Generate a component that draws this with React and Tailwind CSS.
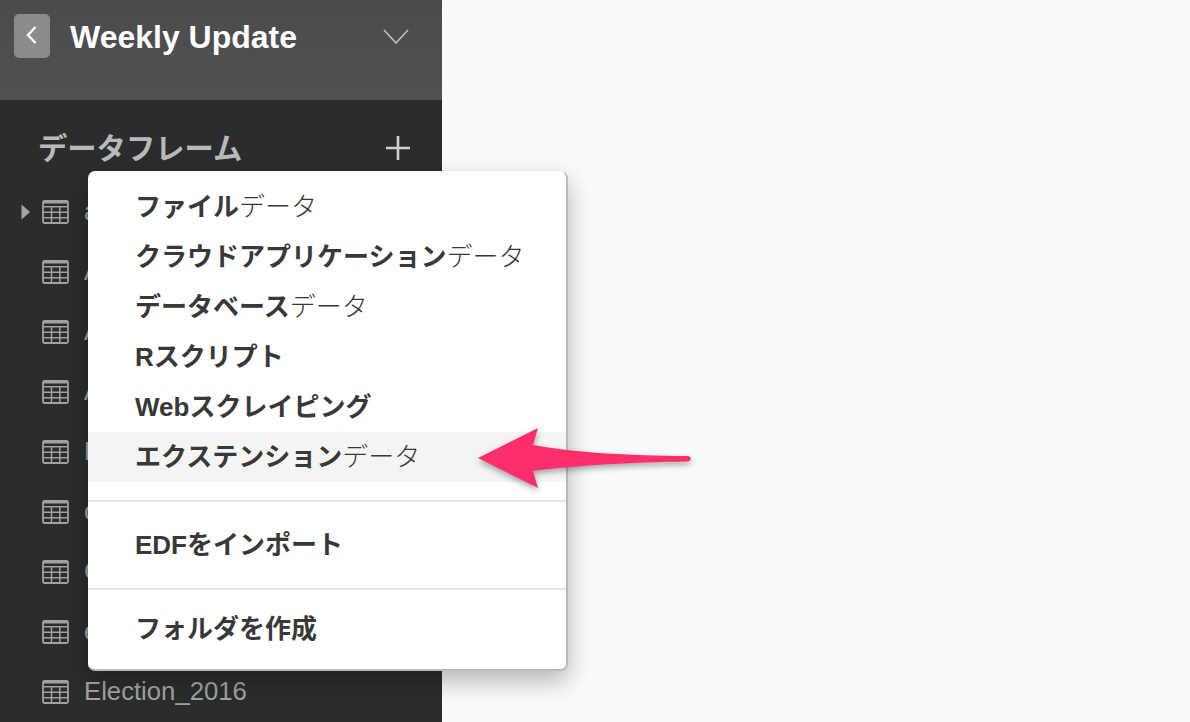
const LATIN = '"Liberation Sans","Noto Sans CJK JP",sans-serif';

function TableIcon() {
  return (
    <svg width="27" height="24" viewBox="0 0 27 24" fill="none" stroke="#a0a1a1" strokeWidth="1.5" className="shrink-0">
      <rect x="1" y="1" width="25" height="22" rx="1.500" strokeWidth="1.800" />
      <path d="M1.500 2.500H25.500" strokeWidth="2" />
      <path d="M1.500 6.800H25.500M1.500 12.300H25.500M1.500 17.800H25.500M9.500 6V22.500M17.800 6V22.500" />
    </svg>
  );
}

const rows = ['airline_delay', 'Airline', 'Airport', 'Apple', 'Bank', 'customer', 'Crime', 'employee', 'Election_2016'];

function Row({ name, first }) {
  return (
    <div className="h-[60px] flex items-center relative pl-[42px] gap-[15px]">
      {first && (
        <svg width="10" height="16" viewBox="0 0 10 16" className="absolute left-[21px] top-[22px]">
          <path d="M0.5 0.5L9 8L0.5 15.5Z" fill="#a3a4a4" />
        </svg>
      )}
      <TableIcon />
      <span className="text-[25.700px] text-[#a2a3a3] whitespace-nowrap -mt-[1px]">{name}</span>
    </div>
  );
}

function Item({ bold, light, active }) {
  return (
    <div className={`h-[50px] flex items-center pl-[47px] text-[26px] text-[#383838] whitespace-nowrap ${active ? 'bg-[#f4f4f4]' : ''}`}>
      <span className="font-bold">{bold}</span>
      {light && <span className="font-light">{light}</span>}
    </div>
  );
}

export default function App() {
  return (
    <div className="relative w-[1190px] h-[722px] overflow-hidden flex bg-[#fafafa]" style={{ fontFamily: LATIN }}>
      <aside className="w-[442px] h-full bg-[#2b2d2d] flex flex-col shrink-0">
        <header className="h-[100px] shrink-0 bg-gradient-to-b from-[#4a4b4d] to-[#505153] flex items-start pl-[14px] pt-[14px]">
          <div className="w-[36px] h-[44px] rounded-[5px] bg-[#8b8b8b] flex items-center justify-center">
            <svg width="14" height="20" viewBox="0 0 14 20" fill="none" stroke="#fff" strokeWidth="2.4" className="-mt-[2px]">
              <path d="M10.500 2L3 10L10.500 18" />
            </svg>
          </div>
          <h1 className="ml-[20px] text-[32px] leading-[46px] font-bold text-white whitespace-nowrap">Weekly Update</h1>
          <svg width="26" height="15" viewBox="0 0 26 15" fill="none" stroke="#c4c5c6" strokeWidth="1.5" className="ml-[86px] mt-[15px]">
            <path d="M1 1L13 14L25 1" />
          </svg>
        </header>
        <div className="h-[82px] shrink-0 flex items-center pl-[38px] pt-[14px]">
          <span className="text-[29.300px] font-semibold text-[#b8b9b9] w-[347px] whitespace-nowrap mt-[2px]">データフレーム</span>
          <svg width="26" height="26" viewBox="0 0 26 26" stroke="#cfd0d0" strokeWidth="2.6">
            <path d="M13 1V25M1 13H25" />
          </svg>
        </div>
        <div>
          {rows.map((n, i) => <Row key={n} name={n} first={i === 0} />)}
        </div>
      </aside>

      <div className="absolute left-[88px] top-[171px] w-[480px] h-[500px] bg-white rounded-[7px] border-r-2 border-b-2 border-[#b9b9b9] shadow-[0_10px_24px_rgba(0,0,0,0.28)] pt-[11px]">
        <Item bold="ファイル" light="データ" />
        <Item bold="クラウドアプリケーション" light="データ" />
        <Item bold="データベース" light="データ" />
        <Item bold="Rスクリプト" />
        <Item bold="Webスクレイピング" />
        <Item bold="エクステンション" light="データ" active />
        <div className="h-[2px] bg-[#e4e4e4] mt-[18px]" />
        <div className="h-[86px] flex items-center pl-[47px] text-[26px] font-bold text-[#383838]">EDFをインポート</div>
        <div className="h-[2px] bg-[#e4e4e4]" />
        <div className="h-[78px] flex items-center pl-[47px] text-[26px] font-bold text-[#383838]">フォルダを作成</div>
      </div>

      <svg width="230" height="80" viewBox="0 0 230 80" className="absolute left-[470px] top-[420px] drop-shadow-[0_3px_3px_rgba(0,0,0,0.35)]">
        <path d="M8 38L68 8L63 25C100 32 160 36 217 36C222 36 222 41.500 217 41.500C160 42 100 46 63 51L68 68Z" fill="#ff2f6c" />
      </svg>
    </div>
  );
}
